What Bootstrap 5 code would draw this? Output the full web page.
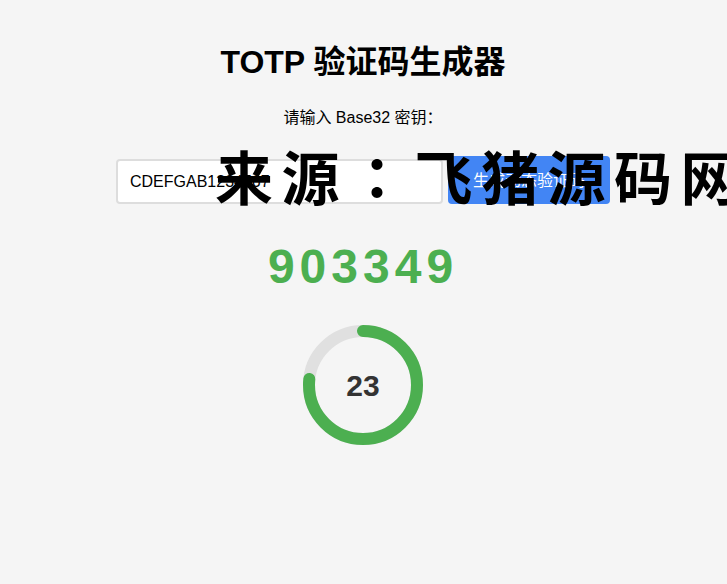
<!DOCTYPE html>
<html lang="zh">
<head>
<meta charset="utf-8">
<title>TOTP 验证码生成器</title>
<link href="https://cdn.jsdelivr.net/npm/bootstrap@5.3.0/dist/css/bootstrap.min.css" rel="stylesheet">
<style>
html,body{height:100%}
body{background:#f5f5f5;color:#000;font-family:"Liberation Sans","Noto Sans CJK SC",sans-serif;font-size:16px;overflow:hidden}
.page-wrap{position:relative;width:726px;height:584px;padding-top:44px}
.page-title{font-size:32px;font-weight:700;line-height:37px;margin:0 0 28px}
.key-label{line-height:18px;margin:0 0 29px;font-size:16px}
.form-line{gap:5px;height:48px}
.key-input{width:327px;height:45px;border:2px solid #ddd;border-radius:4px;padding:0 12px;font:inherit;color:#000;background:#fff;outline:0}
.gen-btn{width:162px;height:48px;background:#4285f4;color:#fff;border:0;border-radius:4px;font-size:16px;padding:1px 0 0}
.code-text{color:#4caf50;font-size:48px;font-weight:700;letter-spacing:5px;line-height:55px;margin-top:35px}
.ring-box{position:relative;width:120px;height:120px;margin-top:31px}
.ring-num{position:absolute;inset:0;color:#333;font-size:30px;font-weight:700}
.stamp{position:absolute;left:215px;top:137px;white-space:nowrap;font-family:"Noto Sans CJK SC",sans-serif;font-weight:700;font-size:58px;line-height:76px;letter-spacing:8.5px;color:#000;text-align:left;pointer-events:none}
.stamp-colon{font-family:"Noto Sans CJK TC",sans-serif}
</style>
</head>
<body>
<div class="page-wrap d-flex flex-column align-items-center text-center">
  <h1 class="page-title">TOTP 验证码生成器</h1>
  <p class="key-label">请输入 Base32 密钥：</p>
  <div class="form-line d-flex align-items-end">
    <input class="key-input" type="text" value="CDEFGAB1234567">
    <button class="gen-btn btn" type="button">生成动态验证码</button>
  </div>
  <div class="code-text">903349</div>
  <div class="ring-box">
    <svg width="120" height="120" viewBox="0 0 120 120">
      <circle cx="60" cy="60" r="54" fill="none" stroke="#e0e0e0" stroke-width="12"/>
      <circle cx="60" cy="60" r="54" fill="none" stroke="#4caf50" stroke-width="12" stroke-linecap="round" stroke-dasharray="260.2 339.3" transform="rotate(-90 60 60)"/>
    </svg>
    <div class="ring-num d-flex align-items-center justify-content-center">23</div>
  </div>
  <div class="stamp">来源<span class="stamp-colon" lang="zh-Hant">：</span>飞猪源码网</div>
</div>
<script src="https://cdn.jsdelivr.net/npm/bootstrap@5.3.0/dist/js/bootstrap.bundle.min.js"></script>
</body>
</html>
